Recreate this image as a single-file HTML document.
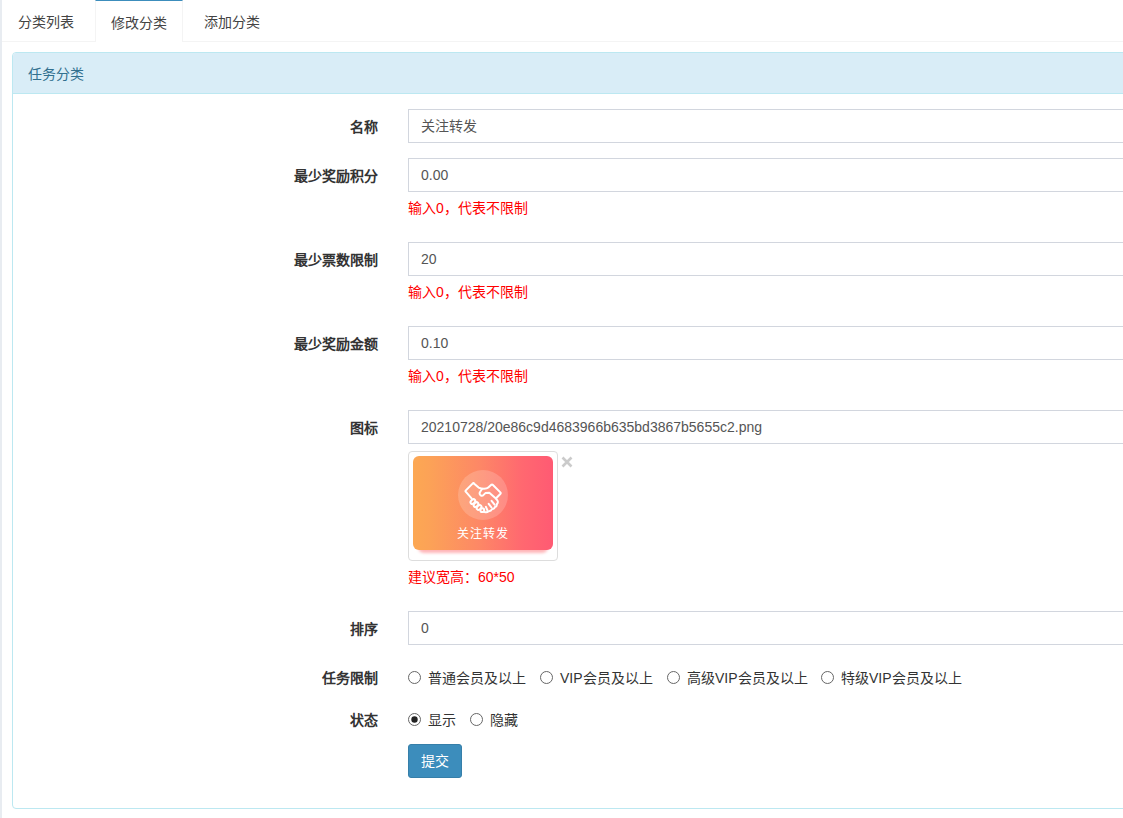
<!DOCTYPE html>
<html lang="zh-CN">
<head>
<meta charset="utf-8">
<style>
*{box-sizing:border-box;margin:0;padding:0}
html,body{width:1123px;height:818px;overflow:hidden;background:#fff}
body{font-family:"Liberation Sans",sans-serif;font-size:14px;color:#333;position:relative}
.strip{position:absolute;left:0;top:0;width:2px;height:818px;background:#e8ecf1}
.tabs{position:absolute;left:2px;top:0;right:0;height:42px;border-bottom:1px solid #f4f4f4}
.tab{position:absolute;top:0;height:42px;line-height:44px;color:#444;white-space:nowrap}
.tab.active{background:#fff;border-top:1px solid #3c8dbc;border-left:1px solid #f4f4f4;border-right:1px solid #f4f4f4;height:42px}
.panel{position:absolute;left:12px;top:52px;width:1130px;height:757px;border:1px solid #bce8f1;border-radius:4px}
.ph{position:absolute;left:0;top:0;right:0;height:41px;background:#d9edf7;border-bottom:1px solid #bce8f1;color:#31708f;border-radius:3px 3px 0 0}
.ph span{position:absolute;left:15px;top:0;line-height:42px}
.lbl{position:absolute;right:745px;font-weight:bold;color:#333;white-space:nowrap}
.inp{position:absolute;left:408px;width:800px;height:34px;border:1px solid #d2d6de;color:#555}
.inp span{position:absolute;left:12px;top:0;line-height:32px}
.help{position:absolute;left:408px;color:#ff0000;white-space:nowrap}
.radio{position:absolute;white-space:nowrap;color:#333}
.rb{position:absolute;width:13px;height:13px;border:1px solid #767676;border-radius:50%}
.btn{position:absolute;left:408px;top:744px;width:54px;height:34px;background:#3c8dbc;border:1px solid #367fa9;border-radius:3px;color:#fff;text-align:center;line-height:32px}
.thumb{position:absolute;left:408px;top:451px;width:150px;height:110px;border:1px solid #ddd;border-radius:4px;background:#fff}
.card{position:absolute;left:4px;top:4px;width:140px;height:94px;border-radius:6px;background:linear-gradient(90deg,#fca853 0%,#fca257 12%,#fd8766 48%,#ff6870 78%,#ff5a73 100%);}
.shd{position:absolute;left:9px;top:92px;width:130px;height:9px;border-radius:0 0 6px 6px;background:rgba(255,120,125,.55);filter:blur(1.5px)}
.circ{position:absolute;left:45px;top:14px;width:50px;height:50px;border-radius:50%;background:rgba(255,255,255,.18)}
.hs{position:absolute;left:47px;top:22px}
.ct{position:absolute;left:0;width:140px;top:70px;text-align:center;color:#fff;font-size:12px;letter-spacing:1px;line-height:16px}
.close{position:absolute;left:561px;top:456px}
.rsvg{position:absolute}
</style>
</head>
<body>
<div class="strip"></div>
<div class="tabs">
  <div class="tab" style="left:16px">分类列表</div>
  <div class="tab active" style="left:93px;width:88px"><span style="position:absolute;left:15px">修改分类</span></div>
  <div class="tab" style="left:202px">添加分类</div>
</div>
<div class="panel">
  <div class="ph"><span>任务分类</span></div>
</div>

<div class="lbl" style="top:116px">名称</div>
<div class="inp" style="top:109px"><span>关注转发</span></div>

<div class="lbl" style="top:165px">最少奖励积分</div>
<div class="inp" style="top:158px"><span>0.00</span></div>
<div class="help" style="top:197px">输入0，代表不限制</div>

<div class="lbl" style="top:249px">最少票数限制</div>
<div class="inp" style="top:242px"><span>20</span></div>
<div class="help" style="top:281px">输入0，代表不限制</div>

<div class="lbl" style="top:333px">最少奖励金额</div>
<div class="inp" style="top:326px"><span>0.10</span></div>
<div class="help" style="top:365px">输入0，代表不限制</div>

<div class="lbl" style="top:417px">图标</div>
<div class="inp" style="top:410px"><span>20210728/20e86c9d4683966b635bd3867b5655c2.png</span></div>

<div class="help" style="top:566px">建议宽高：60*50</div>

<div class="lbl" style="top:618px">排序</div>
<div class="inp" style="top:611px"><span>0</span></div>

<div class="lbl" style="top:667px">任务限制</div>
<div class="lbl" style="top:709px">状态</div>


<div class="thumb"><div class="shd"></div><div class="card"><div class="circ"></div>
<svg class="hs" width="46" height="40" viewBox="0 0 46 40" fill="none" stroke="#fff" stroke-width="2" stroke-linejoin="round" stroke-linecap="round">
<path d="M13.6 5.2 Q13.2 5 12.8 5.4 L5.6 12.6 Q5.2 13.2 5.7 13.7 L11.6 20.3"/>
<path d="M13.6 5.2 L18.6 9.6 Q21 10.8 24 10.8 Q27 10.8 28.3 9.6 L31.6 6.6 Q32.2 6.2 32.7 6.7 L40.6 14.6 Q41 15.2 40.5 15.7 L35.9 20.5"/>
<path d="M22 11 L19.9 14.2 Q19 16.4 20.8 17.5 Q22.4 18.2 23.6 16.9 L25.4 15.1 L29.3 14.8 L35.9 20.5 L37.3 22.3 Q38.6 24.4 36.9 26 Q37.2 28.2 35 29 Q34.4 31 32 31.2 Q31 33.4 28.5 33.2 Q27 34.8 24.6 34"/>
<path d="M31.6 22.8 L34.6 26.6 M28.7 25.8 L31.5 29.5 M25.9 28.9 L27.3 32"/>
<ellipse cx="12.9" cy="23.6" rx="1.9" ry="2.7" transform="rotate(45 12.9 23.6)"/>
<ellipse cx="16" cy="26.6" rx="1.9" ry="2.7" transform="rotate(45 16 26.6)"/>
<ellipse cx="19.1" cy="29.5" rx="1.9" ry="2.7" transform="rotate(45 19.1 29.5)"/>
<circle cx="22.3" cy="32.2" r="1.9"/>
</svg>
<div class="ct">关注转发</div></div></div>
<svg class="close" width="12" height="12" viewBox="0 0 12 12" stroke="#cbcbcb" stroke-width="2.6" stroke-linecap="butt"><path d="M1.5 1.5 L10.5 10.5 M10.5 1.5 L1.5 10.5"/></svg>

<svg class="rsvg" width="13" height="13" style="left:408px;top:671px"><circle cx="6.5" cy="6.5" r="6" fill="#fff" stroke="#666" stroke-width="1"/></svg>
<div class="radio" style="left:428px;top:667px">普通会员及以上</div>
<svg class="rsvg" width="13" height="13" style="left:540px;top:671px"><circle cx="6.5" cy="6.5" r="6" fill="#fff" stroke="#666" stroke-width="1"/></svg>
<div class="radio" style="left:560px;top:667px">VIP会员及以上</div>
<svg class="rsvg" width="13" height="13" style="left:667px;top:671px"><circle cx="6.5" cy="6.5" r="6" fill="#fff" stroke="#666" stroke-width="1"/></svg>
<div class="radio" style="left:687px;top:667px">高级VIP会员及以上</div>
<svg class="rsvg" width="13" height="13" style="left:821px;top:671px"><circle cx="6.5" cy="6.5" r="6" fill="#fff" stroke="#666" stroke-width="1"/></svg>
<div class="radio" style="left:841px;top:667px">特级VIP会员及以上</div>

<svg class="rsvg" width="13" height="13" style="left:408px;top:713px"><circle cx="6.5" cy="6.5" r="6" fill="#fff" stroke="#666" stroke-width="1"/><circle cx="6.5" cy="6.5" r="3.2" fill="#222"/></svg>
<div class="radio" style="left:428px;top:709px">显示</div>
<svg class="rsvg" width="13" height="13" style="left:470px;top:713px"><circle cx="6.5" cy="6.5" r="6" fill="#fff" stroke="#666" stroke-width="1"/></svg>
<div class="radio" style="left:490px;top:709px">隐藏</div>

<div class="btn">提交</div>
</body>
</html>
